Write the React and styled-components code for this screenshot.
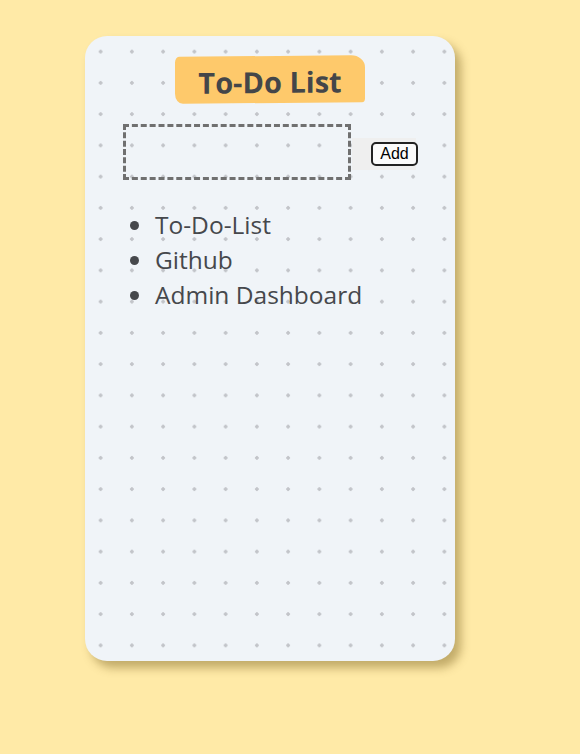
import React from "react";
import styled, { createGlobalStyle } from "styled-components";

const Global = createGlobalStyle`
  html, body { margin: 0; padding: 0; }
  body {
    background: #ffeaa7;
    font-family: "Open Sans", "Noto Sans", sans-serif;
    min-height: 754px;
  }
`;

const Page = styled.div`
  padding: 36px 0 0 85px;
`;

const Card = styled.div`
  box-sizing: border-box;
  width: 370px;
  height: 625px;
  border-radius: 22px;
  background-color: #f0f4f8;
  background-image: radial-gradient(circle, #c2c4c9 1.5px, transparent 2px);
  background-size: 31.25px 31.25px;
  box-shadow: 6px 7px 10px rgba(120, 95, 30, 0.45);
  padding: 20px 0 0 0;
  display: flex;
  flex-direction: column;
`;

const TitleWrap = styled.div`
  display: flex;
  justify-content: center;
`;

const Title = styled.h1`
  margin: 0;
  box-sizing: border-box;
  width: 190px;
  height: 47px;
  display: flex;
  align-items: center;
  justify-content: center;
  padding-top: 3px;
  background: #fec96b;
  color: #444649;
  font-size: 29px;
  font-weight: 700;
  border-radius: 4px 14px 3px 8px / 6px 12px 4px 10px;
  transform: skewY(-0.5deg);
`;

const FormRow = styled.div`
  display: flex;
  align-items: flex-start;
  margin: 21px 0 0 38px;
`;

const Input = styled.input`
  box-sizing: border-box;
  width: 228px;
  height: 56px;
  border: 3px dashed #707070;
  background: transparent;
  outline: none;
  padding: 0 8px;
  font-family: inherit;
  font-size: 18px;
`;

const ButtonTray = styled.div`
  box-sizing: border-box;
  width: 64px;
  height: 32px;
  margin: 14px 0 0 1px;
  background: #efefef;
  display: flex;
  justify-content: flex-end;
  align-items: flex-start;
  padding-top: 4px;
`;

const AddButton = styled.button`
  box-sizing: border-box;
  width: 47px;
  height: 24px;
  margin-right: -2px;
  border: 2px solid #222;
  border-radius: 5px;
  background: #fbfbfb;
  color: #000;
  font-family: "Liberation Sans", Arial, sans-serif;
  font-size: 16px;
  padding: 0;
  line-height: 18px;
`;

const List = styled.ul`
  margin: 27px 0 0 0;
  padding: 0 0 0 69px;
  color: #46484c;
  font-size: 24.5px;
  line-height: 35px;

  li::marker {
    color: #46484c;
  }
`;

const Item = styled.li`
  padding-left: 1px;
`;

const items = ["To-Do-List", "Github", "Admin Dashboard"];

export default function App() {
  return (
    <>
      <Global />
      <Page>
        <Card>
          <TitleWrap>
            <Title>To-Do List</Title>
          </TitleWrap>
          <FormRow>
            <Input type="text" />
            <ButtonTray>
              <AddButton>Add</AddButton>
            </ButtonTray>
          </FormRow>
          <List>
            {items.map((t) => (
              <Item key={t}>{t}</Item>
            ))}
          </List>
        </Card>
      </Page>
    </>
  );
}
